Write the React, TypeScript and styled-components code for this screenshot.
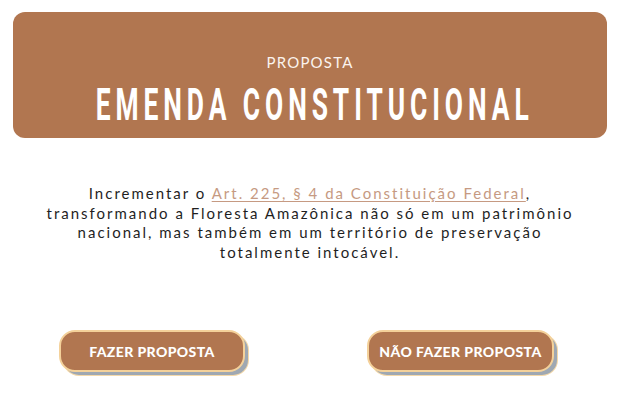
import styled, { createGlobalStyle } from "styled-components";

const GlobalStyle = createGlobalStyle`
  html, body {
    margin: 0;
    padding: 0;
    background: #ffffff;
  }
  body {
    font-family: "Lato", "Open Sans", sans-serif;
  }
`;

const Page = styled.div`
  width: 620px;
  height: 400px;
  box-sizing: border-box;
  padding: 12px 13px 0 13px;
  display: flex;
  flex-direction: column;
  align-items: stretch;
  overflow: hidden;
`;

const Header = styled.header`
  height: 126px;
  box-sizing: border-box;
  padding-top: 41px;
  border-radius: 12px;
  background: #b17650;
  display: flex;
  flex-direction: column;
  align-items: center;
  color: #ffffff;
  overflow: hidden;
`;

const Kicker = styled.div`
  font-family: "Lato", sans-serif;
  font-weight: 400;
  font-size: 15px;
  letter-spacing: 1.2px;
  line-height: 18px;
  color: #fbf3ee;
`;

const Title = styled.h1`
  margin: 12px 0 0 0;
  padding-left: 16px;
  font-family: "Roboto", sans-serif;
  font-weight: 700;
  font-size: 44px;
  line-height: 44px;
  letter-spacing: 8.2px;
  white-space: nowrap;
  transform: scaleX(0.6);
`;

const Text = styled.p`
  margin: 46px auto 0 auto;
  width: 530px;
  text-align: center;
  font-family: "Lato", sans-serif;
  font-size: 15px;
  line-height: 19.5px;
  letter-spacing: 2px;
  color: #1f1f1f;
`;

const Link = styled.a`
  color: #c69a82;
  text-decoration: underline;
  text-underline-offset: 2px;
`;

const Actions = styled.div`
  margin-top: 68px;
  display: flex;
  justify-content: space-between;
  padding: 0 53px 0 46px;
`;

const Button = styled.button<{ $width: number }>`
  width: ${(p) => p.$width}px;
  height: 42px;
  box-sizing: border-box;
  border: 2px solid #f4d19a;
  border-radius: 16px;
  background: #b17650;
  color: #ffffff;
  font-family: "Lato", sans-serif;
  font-weight: 900;
  font-size: 14px;
  letter-spacing: 0.4px;
  text-transform: uppercase;
  box-shadow: 4px 4px 0 -1px #9fa8b2, 4px 4px 0 0 #f4d9aa;
  cursor: pointer;
`;

export default function App() {
  return (
    <>
      <GlobalStyle />
      <Page>
        <Header>
          <Kicker>PROPOSTA</Kicker>
          <Title>EMENDA CONSTITUCIONAL</Title>
        </Header>
        <Text>
          Incrementar o{" "}
          <Link href="#">Art. 225, § 4 da Constituição Federal</Link>,
          transformando a Floresta Amazônica não só em um patrimônio nacional,
          mas também em um território de preservação totalmente intocável.
        </Text>
        <Actions>
          <Button $width={186}>Fazer proposta</Button>
          <Button $width={187}>Não fazer proposta</Button>
        </Actions>
      </Page>
    </>
  );
}
